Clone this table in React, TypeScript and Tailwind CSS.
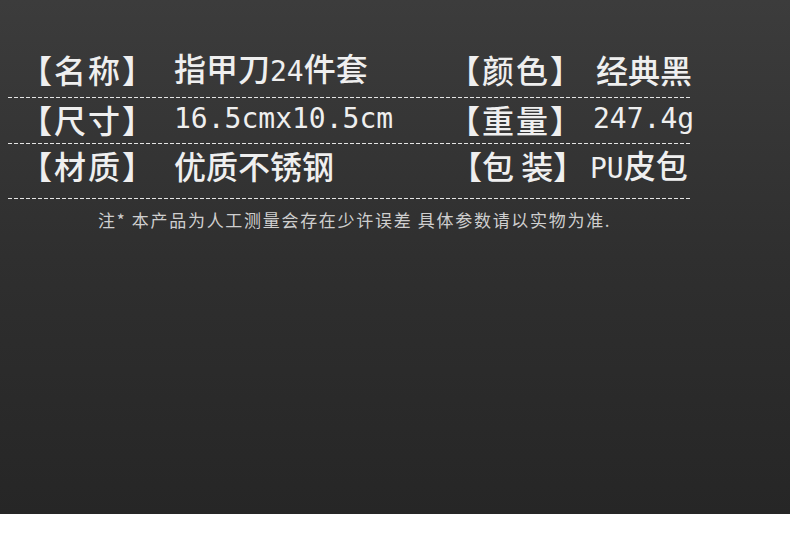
const cjk = "font-['Noto_Sans_CJK_SC',sans-serif]";
const mono = "font-['DejaVu_Sans_Mono','Noto_Sans_CJK_SC',monospace] text-[28px] tracking-normal";

function Dashed() {
  return (
    <div className="h-px w-[682px] bg-[repeating-linear-gradient(90deg,#e4e4e4_0_4px,transparent_4px_6px)]" />
  );
}

// value text: digits and latin letters get the narrow monospace face
function Value({ text }: { text: string }) {
  const parts = text.match(/[0-9A-Za-z.]+|[^0-9A-Za-z.]+/g) ?? [];
  return (
    <span className="flex items-baseline">
      {parts.map((p, i) =>
        /[0-9A-Za-z.]/.test(p) ? (
          <span key={i} className={mono}>
            {p}
          </span>
        ) : (
          <span key={i}>{p}</span>
        )
      )}
    </span>
  );
}

const rows = [
  { l1: "【名称】", v1: "指甲刀24件套", l2: "【颜色】", v2: "经典黑", h: "h-[52px] pb-[5px]", t: "tracking-[2px]", o: "ml-[8px]" },
  { l1: "【尺寸】", v1: "16.5cmx10.5cm", l2: "【重量】", v2: "247.4g", h: "h-[45px] pb-[3px]", t: "tracking-[2px]", o: "ml-[5px]" },
  { l1: "【材质】", v1: "优质不锈钢", l2: "【包 装】", v2: "PU皮包", h: "h-[54px] pb-[12px]", t: "pl-[2px]", o: "ml-[2px]" },
];

export default function App() {
  return (
    <div className="w-[790px] h-[543px] bg-white">
      <div className="w-[790px] h-[514px] bg-gradient-to-b from-[#3c3c3c] via-[#2f2f2f] to-[#262626] pt-[45px] pl-[8px]">
        {rows.map((r) => (
          <div key={r.l1}>
            <div className={`${r.h} flex items-center text-[32px] leading-none font-medium text-[#efefef] ${cjk}`}>
              <span className="w-[166px] pl-[12px] tracking-[2px]">{r.l1}</span>
              <span className="w-[274px]">
                <Value text={r.v1} />
              </span>
              <span className={`w-[140px] whitespace-pre ${r.t}`}>{r.l2}</span>
              <span className={r.o}>
                <Value text={r.v2} />
              </span>
            </div>
            <Dashed />
          </div>
        ))}
        <p className={`mt-[9px] pl-[90px] text-[17px] leading-[24px] tracking-[1.7px] text-[#cfcfcf] ${cjk}`}>
          注* 本产品为人工测量会存在少许误差 具体参数请以实物为准.
        </p>
      </div>
    </div>
  );
}
